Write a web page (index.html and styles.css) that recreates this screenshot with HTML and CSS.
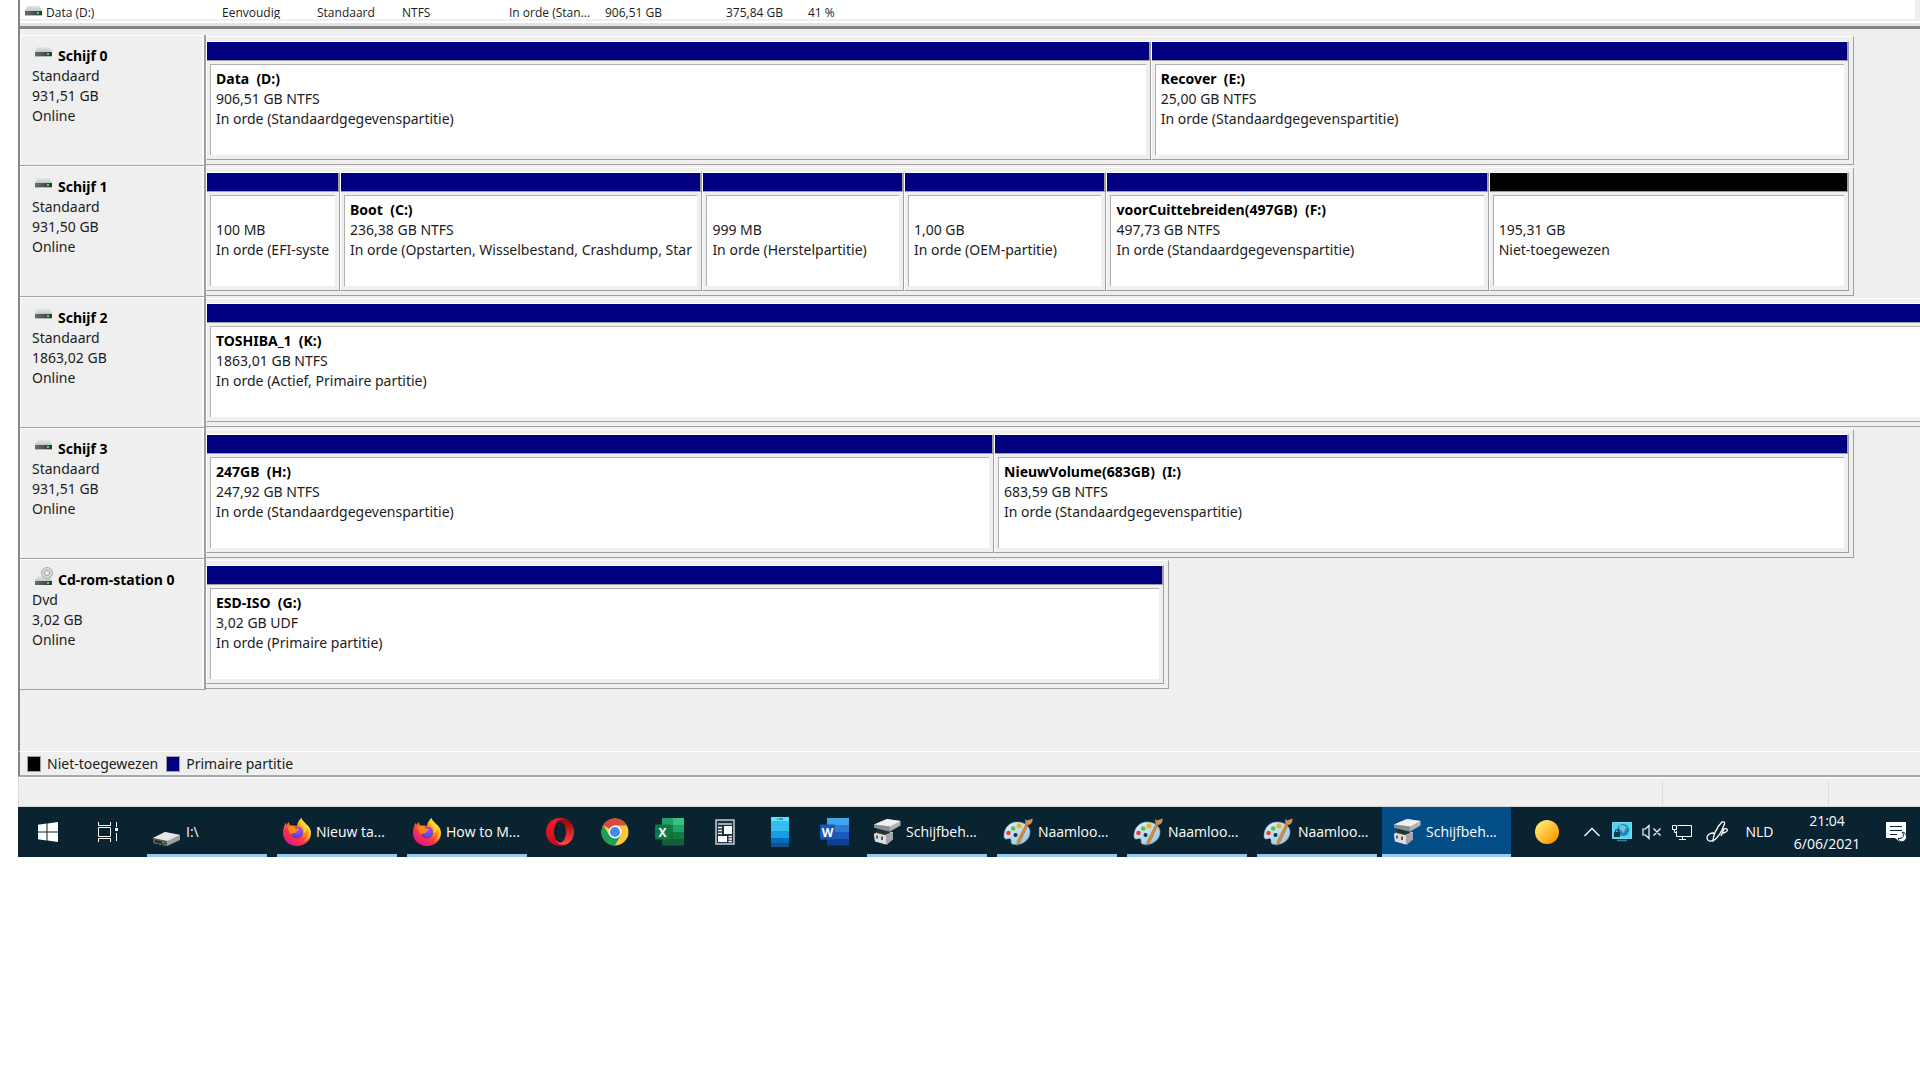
FILE: index.html
```html
<!DOCTYPE html>
<html lang="nl">
<head>
    <meta charset="UTF-8">
    <meta name="viewport" content="width=device-width, initial-scale=1.0">
    <title>Schijfbeheer</title>
    <link rel="stylesheet" href="styles.css">
</head>
<body>

<!-- Shared icons -->
<svg class="sprite" aria-hidden="true">
    <defs>
        <linearGradient id="lid" x1="0" y1="0" x2="0" y2="1"><stop offset="0" stop-color="#e4e6e9"/><stop offset="1" stop-color="#c3c8cd"/></linearGradient>
        <linearGradient id="case" x1="0" y1="0" x2="1" y2="0"><stop offset="0" stop-color="#6a6f70"/><stop offset="1" stop-color="#2f3536"/></linearGradient>
        <linearGradient id="fox" x1="1" y1="0" x2="0.3" y2="1"><stop offset="0" stop-color="#fff44f"/><stop offset="0.4" stop-color="#ff980e"/><stop offset="0.7" stop-color="#ff3647"/><stop offset="1" stop-color="#e31587"/></linearGradient>
        <radialGradient id="globe" cx="0.6" cy="0.3" r="0.8"><stop offset="0" stop-color="#a64bf5"/><stop offset="0.6" stop-color="#6f45e0"/><stop offset="1" stop-color="#3a3a9c"/></radialGradient>
        <linearGradient id="pal" x1="0" y1="0" x2="1" y2="1"><stop offset="0" stop-color="#e8f5fc"/><stop offset="1" stop-color="#8fc1de"/></linearGradient>
        <linearGradient id="sun" x1="0" y1="0" x2="1" y2="1"><stop offset="0.2" stop-color="#ffe26a"/><stop offset="0.85" stop-color="#ff9a00"/></linearGradient>
        <linearGradient id="opera" x1="0" y1="0" x2="0.4" y2="1"><stop offset="0" stop-color="#ff1b2d"/><stop offset="1" stop-color="#c20a18"/></linearGradient>
        <linearGradient id="opera-in" x1="0" y1="0" x2="0" y2="1"><stop offset="0" stop-color="#9c0000"/><stop offset="1" stop-color="#ff4b4b"/></linearGradient>
    </defs>
    <symbol id="icon-disk" viewBox="0 0 17 10">
        <path d="M2 0h13l2 5H0z" fill="url(#lid)"/>
        <path d="M0 5h17v4H0z" fill="url(#case)"/>
        <path d="M0 9h17v1H0z" fill="#b5b9bb"/>
        <path d="M12 6h2v2h-2z" fill="#3ee84e"/>
    </symbol>
    <symbol id="icon-cd" viewBox="0 0 19 19">
        <path d="M2 9h13l2 5H0z" fill="url(#lid)"/>
        <circle cx="12" cy="6" r="5.5" fill="#d4d8da" stroke="#a5abae"/>
        <circle cx="12" cy="6" r="2.5" fill="#eef0f0" stroke="#9da3a6"/>
        <path d="M0 14h17v4H0z" fill="url(#case)"/>
        <path d="M12 15h2v2h-2z" fill="#3ee84e"/>
    </symbol>
    <symbol id="icon-firefox" viewBox="0 0 28 28">
        <path d="M14 28C6 28 0 22.300 0 14.500 0 10.500 1 7.500 3 4.500L3.500 7.200 5.500 4 7 7.200 10.500 7.500 14 8C14.300 4.500 16 2 18.500 0c.8 3 3 4.300 5 6.500C26.500 9 28 12 28 15.500 28 22.500 21.500 28 14 28z" fill="url(#fox)"/>
        <circle cx="14" cy="14.500" r="6" fill="url(#globe)"/>
        <path d="M5 9c4-2 6 0 8 1.500l3 .5c0 2-3 2-3 3.500-2 1-3 0-4 2-2-1-4-4-4-7.500z" fill="#ff8a16"/>
        <path d="M18.500 0c-2 3-1 6 1 8.500s1.500 5 .8 7c2-.5 4-3 3.700-6C27 14 26 20 21 23c9-3 8-13 2.500-16.500C21 4 19.300 3 18.500 0z" fill="#ffdc3e" opacity="0.85"/>
    </symbol>
    <symbol id="icon-paint" viewBox="0 0 30 28">
        <path d="M14 4C6 4 1 10.500 1 18c0 2 1 3.500 3 3 2-.6 3.500-1 4 .6.500 2-.5 3.400 1.500 4.400C17 28.500 27 23 27 14 27 8 21 4 14 4z" fill="url(#pal)" stroke="#7fabc8" stroke-width="0.6"/>
        <circle cx="12.500" cy="17" r="2" fill="#12303f"/>
        <circle cx="5.500" cy="15" r="2.300" fill="#e5443a"/>
        <circle cx="10.200" cy="10.500" r="2.300" fill="#5fbf46"/>
        <circle cx="16" cy="8" r="2.500" fill="#f7b01b"/>
        <path d="M23 6l2 1-8 17-3 4 .5-5z" fill="#e08a35" stroke="#9c5a1c" stroke-width="0.500"/>
        <path d="M22 1l2 1.500 5.500-2C30 4 28 6.500 25 7l-2.500-1z" fill="#c9935a"/>
    </symbol>
    <symbol id="icon-manage" viewBox="0 0 28 26">
        <path d="M1 15l5-3 14 1v7l-6 5.500L2 22z" fill="#c7c9cb"/>
        <path d="M1 14.500l12 2v9L2 22.500z" fill="#dcdddf"/>
        <path d="M13 16.500l7-3.500v7.500l-7 5z" fill="#a3a5a8"/>
        <path d="M4 10l13 1v3l-5 2-8-2z" fill="#23352c"/>
        <path d="M1 5.500L14 0l13.500 2v4.500L17 12.500 1 8.500z" fill="#b1b3b5"/>
        <path d="M1 5.500L14 0l13.500 2L17 7.500z" fill="#f0f0f1"/>
        <path d="M1 5.500l16 2v5L1 8.500z" fill="#8b8e90"/>
        <path d="M4 16.500v3M9 17.500v3.500" stroke="#4c4f50" stroke-width="1.800"/>
    </symbol>
</svg>

<main class="window">
    <div class="volume-list">
        <table>
            <tbody>
                <tr>
                    <td class="col-name"><svg class="disk-icon" width="17" height="10"><use href="#icon-disk"/></svg>Data (D:)</td>
                    <td class="col-layout">Eenvoudig</td>
                    <td class="col-type">Standaard</td>
                    <td class="col-fs">NTFS</td>
                    <td class="col-status">In orde (Stan...</td>
                    <td class="col-size">906,51 GB</td>
                    <td class="col-free">375,84 GB</td>
                    <td class="col-pct">41 %</td>
                </tr>
            </tbody>
        </table>
    </div>
    <div class="splitter"></div>

    <section class="disks">
        <article class="disk">
            <div class="disk-label">
                <h2><svg class="disk-icon" width="17" height="10"><use href="#icon-disk"/></svg>Schijf 0</h2>
                <p>Standaard</p>
                <p>931,51 GB</p>
                <p>Online</p>
            </div>
            <div class="volumes">
                <div class="volume" style="flex-grow: 945">
                    <div class="bar"></div>
                    <div class="info"><h3>Data&nbsp; (D:)</h3><p>906,51 GB NTFS</p><p>In orde (Standaardgegevenspartitie)</p></div>
                </div>
                <div class="volume" style="flex-grow: 698">
                    <div class="bar"></div>
                    <div class="info"><h3>Recover&nbsp; (E:)</h3><p>25,00 GB NTFS</p><p>In orde (Standaardgegevenspartitie)</p></div>
                </div>
            </div>
        </article>

        <article class="disk">
            <div class="disk-label">
                <h2><svg class="disk-icon" width="17" height="10"><use href="#icon-disk"/></svg>Schijf 1</h2>
                <p>Standaard</p>
                <p>931,50 GB</p>
                <p>Online</p>
            </div>
            <div class="volumes">
                <div class="volume" style="flex-grow: 133">
                    <div class="bar"></div>
                    <div class="info unnamed"><p>100 MB</p><p>In orde (EFI-syste</p></div>
                </div>
                <div class="volume" style="flex-grow: 363">
                    <div class="bar"></div>
                    <div class="info"><h3>Boot&nbsp; (C:)</h3><p>236,38 GB NTFS</p><p>In orde (Opstarten, Wisselbestand, Crashdump, Star</p></div>
                </div>
                <div class="volume" style="flex-grow: 201">
                    <div class="bar"></div>
                    <div class="info unnamed"><p>999 MB</p><p>In orde (Herstelpartitie)</p></div>
                </div>
                <div class="volume" style="flex-grow: 202">
                    <div class="bar"></div>
                    <div class="info unnamed"><p>1,00 GB</p><p>In orde (OEM-partitie)</p></div>
                </div>
                <div class="volume" style="flex-grow: 383">
                    <div class="bar"></div>
                    <div class="info"><h3>voorCuittebreiden(497GB)&nbsp; (F:)</h3><p>497,73 GB NTFS</p><p>In orde (Standaardgegevenspartitie)</p></div>
                </div>
                <div class="volume" style="flex-grow: 361">
                    <div class="bar unallocated"></div>
                    <div class="info unnamed"><p>195,31 GB</p><p>Niet-toegewezen</p></div>
                </div>
            </div>
        </article>

        <article class="disk">
            <div class="disk-label">
                <h2><svg class="disk-icon" width="17" height="10"><use href="#icon-disk"/></svg>Schijf 2</h2>
                <p>Standaard</p>
                <p>1863,02 GB</p>
                <p>Online</p>
            </div>
            <div class="volumes volumes-full">
                <div class="volume" style="flex-grow: 1">
                    <div class="bar"></div>
                    <div class="info"><h3>TOSHIBA_1&nbsp; (K:)</h3><p>1863,01 GB NTFS</p><p>In orde (Actief, Primaire partitie)</p></div>
                </div>
            </div>
        </article>

        <article class="disk">
            <div class="disk-label">
                <h2><svg class="disk-icon" width="17" height="10"><use href="#icon-disk"/></svg>Schijf 3</h2>
                <p>Standaard</p>
                <p>931,51 GB</p>
                <p>Online</p>
            </div>
            <div class="volumes">
                <div class="volume" style="flex-grow: 788">
                    <div class="bar"></div>
                    <div class="info"><h3>247GB&nbsp; (H:)</h3><p>247,92 GB NTFS</p><p>In orde (Standaardgegevenspartitie)</p></div>
                </div>
                <div class="volume" style="flex-grow: 855">
                    <div class="bar"></div>
                    <div class="info"><h3>NieuwVolume(683GB)&nbsp; (I:)</h3><p>683,59 GB NTFS</p><p>In orde (Standaardgegevenspartitie)</p></div>
                </div>
            </div>
        </article>

        <article class="disk">
            <div class="disk-label">
                <h2><svg class="cd-icon" width="19" height="19"><use href="#icon-cd"/></svg>Cd-rom-station 0</h2>
                <p>Dvd</p>
                <p>3,02 GB</p>
                <p>Online</p>
            </div>
            <div class="volumes volumes-cd">
                <div class="volume" style="flex-grow: 1">
                    <div class="bar"></div>
                    <div class="info"><h3>ESD-ISO&nbsp; (G:)</h3><p>3,02 GB UDF</p><p>In orde (Primaire partitie)</p></div>
                </div>
            </div>
        </article>
    </section>

    <div class="legend">
        <span class="swatch unallocated"></span><span>Niet-toegewezen</span>
        <span class="swatch"></span><span>Primaire partitie</span>
    </div>
    <div class="statusbar"><span></span><span></span><span></span></div>
</main>

<footer class="taskbar">
    <button class="system" aria-label="Start">
        <svg width="20" height="20" viewBox="0 0 20 20" fill="#fff"><path d="M0 2.800l8.500-1.200v7.900H0zM9.500 1.400L20 0v9.500H9.500zM0 10.500h8.500v7.900L0 17.200zM9.500 10.500H20V20L9.500 18.600z"/></svg>
    </button>
    <button class="system" aria-label="Taakweergave">
        <svg width="22" height="20" viewBox="0 0 22 20" fill="none" stroke="#fff"><path d="M1.500 0v3.500h12V0M1.500 20v-3.500h12V20M1.500 5.500h12v9h-12zM19.500 0v5M19.500 11v8"/><path d="M18 6h3v3h-3z" fill="#fff" stroke="none"/></svg>
    </button>
    <button class="task first">
        <svg width="28" height="28" viewBox="0 0 28 28"><path d="M0 20L12 14l15 3v5l-13 6L0 25z" fill="#9c9ea0"/><path d="M0 20L12 14l15 3-13 6z" fill="#e6e7e8"/><path d="M0 20l14 3v5L0 25z" fill="#55595a"/><path d="M2 22l9 2v2l-9-2z" fill="#222726"/><path d="M9 24h2v1H9z" fill="#53d160"/></svg>
        <span>I:\</span>
    </button>
    <button class="task"><svg width="28" height="28"><use href="#icon-firefox"/></svg><span>Nieuw ta...</span></button>
    <button class="task"><svg width="28" height="28"><use href="#icon-firefox"/></svg><span>How to M...</span></button>

    <button class="pinned" aria-label="Opera">
        <svg width="28" height="28" viewBox="0 0 28 28"><ellipse cx="14" cy="14" rx="14" ry="14" fill="url(#opera)"/><path d="M10 4.500C13 0 19 1 22 2.500 30 8 30 20 22 25.500c-3 1.500-9 2.500-12-2z" fill="url(#opera-in)"/><ellipse cx="14" cy="14" rx="6" ry="10.500" fill="#0a2331"/></svg>
    </button>
    <button class="pinned" aria-label="Chrome">
        <svg width="28" height="28" viewBox="0 0 28 28"><circle cx="14" cy="14" r="13.500" fill="#fbc93d"/><path d="M14 14L2.300 7.200A13.500 13.500 0 0 1 25.700 7.500H14z" fill="#db4a3e"/><path d="M14 14l5.600 3.500-5.800 10A13.500 13.500 0 0 1 2.300 7.200l6 10.300z" fill="#1a9f5a"/><circle cx="14" cy="14" r="6.500" fill="#fff"/><circle cx="14" cy="14" r="5" fill="#4688f1"/></svg>
    </button>
    <button class="pinned" aria-label="Excel">
        <svg width="29" height="28" viewBox="0 0 29 28"><path d="M7 0h11v7H7z" fill="#21a366"/><path d="M18 0h11v7H18z" fill="#33c481"/><path d="M7 7h11v7H7z" fill="#107c41"/><path d="M18 7h11v7H18z" fill="#21a366"/><path d="M7 14h11v7H7z" fill="#0f6e3a"/><path d="M18 14h11v7H18z" fill="#107c41"/><path d="M7 21h22v6.500H7z" fill="#185c37"/><rect y="6.500" width="15" height="15" rx="1" fill="#0f7a3f"/><text class="app-letter" x="7.500" y="18.500" text-anchor="middle">X</text></svg>
    </button>
    <button class="pinned" aria-label="Nieuws">
        <svg width="20" height="26" viewBox="0 0 20 26"><path d="M1 1h18v24H1z" fill="#1b3140" stroke="#c8cfd4" stroke-width="1.500"/><path d="M3 4h14v2H3z" fill="#9fabb3"/><path d="M9 7h8v8H9zM3 17h9v6H3z" fill="#fff"/><path d="M3 8.500h4M3 11.500h4M3 14.500h4M13.500 17.500H17M13.500 20H17M13.500 22.500H17" stroke="#fff" stroke-width="1.300"/></svg>
    </button>
    <button class="pinned" aria-label="Je telefoon">
        <svg width="18" height="30" viewBox="0 0 18 30"><path d="M0 0h18v4H0z" fill="#55e5ff"/><path d="M0 4h18v10H0z" fill="#35bff0"/><path d="M0 14h18v7H0z" fill="#199de2"/><path d="M0 21h18v5H0z" fill="#006cbe"/><path d="M0 26h18v4H0z" fill="#1a4f8b"/><path d="M6 2h1M8 2h4" stroke="#10516f"/></svg>
    </button>
    <button class="pinned" aria-label="Word">
        <svg width="29" height="28" viewBox="0 0 29 28"><path d="M7 0h22v7H7z" fill="#41a5ee"/><path d="M7 7h22v7H7z" fill="#2b7cd3"/><path d="M7 14h22v7H7z" fill="#185abd"/><path d="M7 21h22v6.500H7z" fill="#103f91"/><rect y="6.500" width="15" height="15" rx="1" fill="#1b56b8"/><text class="app-letter" x="7.500" y="18.500" text-anchor="middle">W</text></svg>
    </button>

    <button class="task"><svg width="28" height="26"><use href="#icon-manage"/></svg><span>Schijfbeh...</span></button>
    <button class="task"><svg width="30" height="28"><use href="#icon-paint"/></svg><span>Naamloo...</span></button>
    <button class="task"><svg width="30" height="28"><use href="#icon-paint"/></svg><span>Naamloo...</span></button>
    <button class="task"><svg width="30" height="28"><use href="#icon-paint"/></svg><span>Naamloo...</span></button>
    <button class="task active"><svg width="28" height="26"><use href="#icon-manage"/></svg><span>Schijfbeh...</span></button>

    <div class="tray">
        <button class="weather" aria-label="Weer"><svg width="24" height="24"><circle cx="12" cy="12" r="12" fill="url(#sun)"/></svg></button>
        <button aria-label="Verborgen pictogrammen"><svg width="16" height="10" viewBox="0 0 16 10" fill="none" stroke="#fff" stroke-width="1.300"><path d="M.5 9L8 1.500 15.500 9"/></svg></button>
        <button aria-label="VPN"><svg width="20" height="20" viewBox="0 0 20 20"><path d="M.5.5h19v16H.5z" fill="#4fd3ee" stroke="#7fdcee"/><circle cx="11" cy="8" r="6" fill="#2583b4"/><path d="M7 4c3-2 6-1 8 2-2 0-2 4-4 5-1-3-4-3-4-7z" fill="#69c7dc"/><path d="M2 10h6v5H2z" fill="#0b3c50"/><path d="M3.500 10V8h3v2" fill="none" stroke="#0b3c50"/><path d="M5 18.500h10" stroke="#3e7f8e" stroke-width="1.500"/></svg></button>
        <button aria-label="Geluid"><svg width="20" height="16" viewBox="0 0 20 16" fill="none" stroke="#fff" stroke-width="1.200"><path d="M1 5h2.500L7 1.500v13L3.500 11H1zM11.500 4.500l7 7M18.500 4.500l-7 7"/></svg></button>
        <button aria-label="Netwerk"><svg width="20" height="17" viewBox="0 0 20 17" fill="none" stroke="#fff"><path d="M5.500 1.500h14v11h-15V7M10.500 12.500v3M7 15.500h7M.5 1.500h4v4h-4zM2.500 5.500v3h2"/></svg></button>
        <button class="pen" aria-label="Pen"><svg width="22" height="22" viewBox="0 0 22 22" fill="none" stroke="#fff" stroke-width="1.300"><path d="M7 20c0-5 3-13 9-19 2-.5 3 0 2.500 2C16 10 12 17 7 20zM13 4l-3 6M15 15l3-7M8 12c-4 0-7 2-7 5s4 4 6 2M17 8c3-1 5 0 4 2s-4 1-5 3"/></svg></button>
        <button class="lang">NLD</button>
        <button class="clock"><time>21:04</time><time>6/06/2021</time></button>
        <button class="action" aria-label="Actiecentrum"><svg width="21" height="21" viewBox="0 0 21 21"><path d="M0 0h20v15l-6 1v4l-5-4H0z" fill="#fff"/><path d="M4 4.500h12M4 8.500h12M4 12.500h7" stroke="#0a2331"/><path d="M16 10c3 3 1 7-4 6.500 1 5 9 4 8.500-2.500-.5-2-2-3.500-4.500-4z" fill="#fff" stroke="#0a2331"/></svg></button>
    </div>
</footer>

</body>
</html>
```
FILE: styles.css
```css
* {
    box-sizing: border-box;
}

body {
    margin: 0;
    padding-left: 18px;
    background-color: #fff;
    color: #1c1c1c;
    font-family: "Open Sans", "Noto Sans", sans-serif;
    font-size: 14px;
    line-height: 20px;
}

h2, h3, p {
    margin: 0;
    font-size: 14px;
    line-height: 20px;
    white-space: nowrap;
}

h2, h3 {
    color: #000;
    font-weight: 700;
}

.disks, .legend {
    font-family: "Noto Sans", "Open Sans", sans-serif;
}

.sprite {
    position: absolute;
    width: 0;
    height: 0;
}

.window {
    background-color: #efefef;
}

/* Volume list */
.volume-list {
    height: 19px;
    margin-right: 5px;
    border-left: 2px solid #858585;
    background-color: #fff;
    overflow: hidden;
}

.volume-list table {
    border-collapse: collapse;
    table-layout: fixed;
    width: 860px;
    font-size: 12px;
    line-height: 25px;
}

.volume-list td {
    padding: 0;
    white-space: nowrap;
}

.volume-list .disk-icon {
    margin: 0 4px 1px 5px;
}

.col-name { width: 202px; }
.col-layout { width: 95px; }
.col-type { width: 85px; }
.col-fs { width: 107px; }
.col-status { width: 96px; }
.col-size { width: 121px; }
.col-free { width: 82px; }

.splitter {
    height: 10px;
    border-bottom: 3px solid #858585;
    border-left: 2px solid #858585;
    background: linear-gradient(#efefef 2px, #fff 2px, #fff 4px, #e5e5e5 4px);
}

/* Disk rows */
.disks {
    padding: 6px 0 61px;
    border-left: 2px solid #858585;
}

.disk {
    display: flex;
    height: 131px;
}

.disk-label {
    flex: none;
    width: 186px;
    padding: 11px 0 0 12px;
    border: 1px solid #a0a0a0;
    border-width: 0 2px 1px 0;
    box-shadow: inset 1px 1px #fff, inset -2px 0 #f8f8f8;
}

.disk-label h2 {
    display: flex;
    align-items: center;
    height: 20px;
}

.disk-label .disk-icon {
    margin: 0 6px 8px 3px;
}

.disk-label .cd-icon {
    margin: 0 4px 8px 3px;
}

.volumes {
    display: flex;
    width: 96.15%;
    margin: 1px 66px 1px 0;
    padding: 4px 4px 4px 0;
    border: 1px solid #a0a0a0;
    border-width: 1px 1px 1px 0;
    border-top-color: #fff;
}

.volumes-full {
    width: 100%;
    margin-right: 0;
    padding-right: 0;
    border-right: 0;
}

.volumes-cd {
    width: 56%;
    margin-right: 751px;
}

.volume {
    display: flex;
    flex: 1 1 0;
    flex-direction: column;
    min-width: 0;
    border: 1px solid #a0a0a0;
    border-top-color: #fff;
    border-left-color: #fff;
}

.bar {
    flex: none;
    height: 19px;
    border-right: 1px solid #a0a0a0;
    border-bottom: 1px solid #a0a0a0;
    background-color: #000080;
}

.unallocated {
    background-color: #000;
}

.info {
    flex: 1;
    margin: 3px 4px 4px 3px;
    padding: 4px 0 0 5px;
    border: 1px solid #b0b0b0;
    border-width: 1px 0 0 1px;
    background-color: #fff;
    overflow: hidden;
}

.info.unnamed {
    padding-top: 24px;
}

.volumes-full .volume,
.volumes-full .bar {
    border-right: 0;
}

.volumes-full .info {
    margin-right: 0;
}

/* Legend and status bar */
.legend {
    display: flex;
    align-items: center;
    gap: 6px;
    height: 26px;
    padding-left: 7px;
    border-top: 1px solid #fff;
    border-bottom: 2px solid #a8a8a8;
    border-left: 2px solid #858585;
}

.swatch {
    width: 14px;
    height: 16px;
    border: 1px solid #a0a0a0;
    background-color: #000080;
}

.swatch.unallocated {
    background-color: #000;
}

.legend span:nth-child(3) {
    margin-left: 2px;
}

.statusbar {
    display: flex;
    height: 30px;
    border-top: 1px solid #fff;
    border-bottom: 1px solid #d8d8d8;
    border-left: 1px solid #dcdcdc;
}

.statusbar span {
    flex: none;
    width: 91px;
    margin-top: 4px;
}

.statusbar span:first-child {
    flex: 1;
    border-right: 1px solid #dcdcdc;
}

.statusbar span:nth-child(2) {
    width: 166px;
    border-right: 1px solid #dcdcdc;
}

/* Taskbar */
.taskbar {
    display: flex;
    height: 50px;
    background-color: #0a2331;
}

.taskbar button {
    display: flex;
    align-items: center;
    justify-content: center;
    flex: none;
    padding: 0;
    border: 0;
    background: none;
    color: #fff;
    font-family: inherit;
    font-size: 14px;
    line-height: 20px;
}

.taskbar .system {
    width: 60px;
}

.taskbar .task {
    justify-content: flex-start;
    gap: 5px;
    width: 120px;
    margin: 0 5px;
    padding: 3px 0 0 6px;
    border-bottom: 3px solid #99c9ef;
    white-space: nowrap;
}

.taskbar .first {
    margin-left: 9px;
}

.taskbar .active {
    width: 129px;
    margin: 0;
    padding-left: 11px;
    background-color: #034e86;
}

.taskbar .pinned {
    width: 55px;
}

.app-letter {
    fill: #fff;
    font-size: 12px;
    font-weight: 700;
}

.tray {
    display: flex;
    margin-left: auto;
}

.tray button {
    width: 30px;
}

.tray .weather { width: 60px; }
.tray .pen { width: 40px; }
.tray .lang { width: 45px; }
.tray .action { width: 48px; }

.tray .clock {
    flex-direction: column;
    gap: 3px;
    width: 90px;
}
```
